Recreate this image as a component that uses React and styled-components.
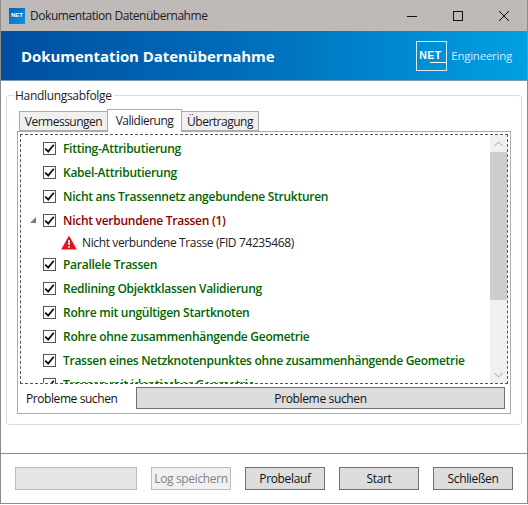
import React from 'react';
import styled, { createGlobalStyle } from 'styled-components';

const GlobalStyle = createGlobalStyle`
  html, body { margin: 0; padding: 0; background: #fff; }
  body { font-family: "Open Sans", "Liberation Sans", sans-serif; font-size: 12px; color: #111; }
`;

const checks = [
  { label: 'Fitting-Attributierung' },
  { label: 'Kabel-Attributierung' },
  { label: 'Nicht ans Trassennetz angebundene Strukturen' },
  { label: 'Nicht verbundene Trassen (1)', failed: true },
  { label: 'Parallele Trassen' },
  { label: 'Redlining Objektklassen Validierung' },
  { label: 'Rohre mit ungültigen Startknoten' },
  { label: 'Rohre ohne zusammenhängende Geometrie' },
  { label: 'Trassen eines Netzknotenpunktes ohne zusammenhängende Geometrie' },
  { label: 'Trassen mit identischer Geometrie' },
];

const App = () => (
  <>
    <GlobalStyle />
    <Window>
      <TitleBar>
        <AppIcon>NET</AppIcon>
        <WindowTitle>Dokumentation Datenübernahme</WindowTitle>
        <WindowControls>
          <svg width="12" height="12" viewBox="0 0 12 12"><path d="M1 6.5h10" stroke="#111" fill="none" /></svg>
          <svg width="12" height="12" viewBox="0 0 12 12"><rect x="1.5" y="1.5" width="9" height="9" stroke="#111" fill="none" /></svg>
          <svg width="12" height="12" viewBox="0 0 12 12"><path d="M1 1l10 10M11 1L1 11" stroke="#111" fill="none" /></svg>
        </WindowControls>
      </TitleBar>
      <Banner>
        <BannerTitle>Dokumentation Datenübernahme</BannerTitle>
        <Brand>
          <BrandBox>NET</BrandBox>
          <BrandName>Engineering</BrandName>
        </Brand>
      </Banner>
      <Content>
        <GroupBox>
          <GroupLegend>Handlungsabfolge</GroupLegend>
          <Tabs>
            <Tab $width={89}>Vermessungen</Tab>
            <Tab $active $width={75}>Validierung</Tab>
            <Tab $width={78}>Übertragung</Tab>
          </Tabs>
          <TabPanel>
            <List>
              <Rows>
                {checks.map(item => (
                  <React.Fragment key={item.label}>
                    <Row>
                      <Expander>{item.failed && <ExpanderGlyph />}</Expander>
                      <Check>
                        <svg width="11" height="11" viewBox="0 0 11 11">
                          <path d="M1.2 5.6l3 3L9.8 1.8" stroke="#111" strokeWidth="1.8" fill="none" />
                        </svg>
                      </Check>
                      <RowLabel $failed={item.failed}>{item.label}</RowLabel>
                    </Row>
                    {item.failed && (
                      <ChildRow>
                        <svg width="16" height="15" viewBox="0 0 16 15">
                          <path d="M8 0.5L15.8 14.5H0.2z" fill="#e81123" />
                          <path d="M7.2 5h1.6v5H7.2zM7.2 11h1.6v1.7H7.2z" fill="#fff" />
                        </svg>
                        <span>Nicht verbundene Trasse (FID 74235468)</span>
                      </ChildRow>
                    )}
                  </React.Fragment>
                ))}
              </Rows>
              <ScrollBar>
                <ScrollArrow>
                  <svg width="9" height="6" viewBox="0 0 9 6"><path d="M0.5 5L4.5 1l4 4" stroke="#a3a3a3" fill="none" /></svg>
                </ScrollArrow>
                <ScrollTrack>
                  <ScrollThumb />
                </ScrollTrack>
                <ScrollArrow>
                  <svg width="9" height="6" viewBox="0 0 9 6"><path d="M0.5 1L4.5 5l4-4" stroke="#a3a3a3" fill="none" /></svg>
                </ScrollArrow>
              </ScrollBar>
            </List>
            <SearchRow>
              <SearchLabel>Probleme suchen</SearchLabel>
              <SearchButton>Probleme suchen</SearchButton>
            </SearchRow>
          </TabPanel>
        </GroupBox>
      </Content>
      <Footer>
        <Progress />
        <FooterButton disabled>Log speichern</FooterButton>
        <FooterButton>Probelauf</FooterButton>
        <FooterButton>Start</FooterButton>
        <FooterButton>Schließen</FooterButton>
      </Footer>
    </Window>
  </>
);

const Window = styled.div`
  width: 528px;
  height: 504px;
  box-sizing: border-box;
  display: flex;
  flex-direction: column;
  background: #fff;
  border: 1px solid #8c8c8c;
  border-top: 0;
  overflow: hidden;
`;

const TitleBar = styled.div`
  height: 31px;
  flex: none;
  display: flex;
  align-items: center;
  padding-left: 8px;
  background: #bfbab8;
`;

const AppIcon = styled.div`
  width: 16px;
  height: 16px;
  margin-right: 5px;
  background: linear-gradient(135deg, #0a5fb0, #1196e0);
  color: #fff;
  font-family: "Liberation Sans", sans-serif;
  font-size: 6px;
  font-weight: 700;
  line-height: 14px;
  text-align: center;
`;

const WindowTitle = styled.div`
  font-size: 12px;
  letter-spacing: -0.45px;
  color: #1a1a1a;
`;

const WindowControls = styled.div`
  margin-left: auto;
  display: flex;
  gap: 34px;
  padding-right: 17px;
  svg { display: block; }
`;

const Banner = styled.div`
  height: 50px;
  flex: none;
  box-sizing: border-box;
  display: flex;
  align-items: center;
  justify-content: space-between;
  padding: 0 15px 0 20px;
  background: linear-gradient(90deg, #004f9f 0%, #0070bd 50%, #00a0e3 100%);
  border-bottom: 1px solid #7e99b3;
`;

const BannerTitle = styled.div`
  font-size: 15px;
  font-weight: 700;
  letter-spacing: -0.07px;
  color: #fff;
`;

const Brand = styled.div`
  display: flex;
  align-items: center;
  gap: 4px;
`;

const BrandBox = styled.div`
  position: relative;
  width: 31px;
  height: 30px;
  box-sizing: border-box;
  padding: 7px 0 0 2px;
  border: 1px solid #dcecf8;
  color: #fff;
  font-family: "Liberation Sans", sans-serif;
  font-size: 10.5px;
  font-weight: 700;
  letter-spacing: 0.4px;
  line-height: 13px;

  &::after {
    content: '';
    position: absolute;
    left: 13px;
    right: 0;
    top: 20px;
    height: 1px;
    background: #fff;
  }
`;

const BrandName = styled.div`
  font-size: 11.5px;
  letter-spacing: -0.25px;
  color: #d5ebf9;
`;

const Content = styled.div`
  flex: 1;
  padding: 14px 5px 0;
`;

const GroupBox = styled.div`
  position: relative;
  height: 330px;
  box-sizing: border-box;
  padding: 15px 10px 0;
  border: 1px solid #d5dfe5;
  border-radius: 3px;
`;

const GroupLegend = styled.div`
  position: absolute;
  top: -8px;
  left: 7px;
  padding: 0 2px 0 1px;
  background: #fff;
  font-size: 12px;
  line-height: 16px;
  letter-spacing: -0.32px;
  color: #222;
`;

const Tabs = styled.div`
  display: flex;
  align-items: flex-end;
  height: 20px;
  padding-left: 2px;
  position: relative;
  z-index: 1;
`;

const Tab = styled.div`
  box-sizing: border-box;
  width: ${props => props.$width}px;
  height: ${props => (props.$active ? '23px' : '20px')};
  margin-bottom: ${props => (props.$active ? '-1px' : '0')};
  margin-right: -1px;
  padding-bottom: ${props => (props.$active ? '2px' : '0')};
  display: flex;
  align-items: center;
  justify-content: center;
  position: relative;
  z-index: ${props => (props.$active ? 1 : 0)};
  background: ${props => (props.$active ? '#fff' : '#f0f0f0')};
  border: 1px solid #acacac;
  border-bottom: ${props => (props.$active ? '0' : '1px solid #acacac')};
  font-size: 12px;
  letter-spacing: -0.5px;
  color: #1a1a1a;
`;

const TabPanel = styled.div`
  height: 283px;
  box-sizing: border-box;
  padding: 2px;
  border: 1px solid #acacac;
`;

const List = styled.div`
  height: 250px;
  box-sizing: border-box;
  display: flex;
  border: 1px dashed #555;
  overflow: hidden;
`;

const Rows = styled.div`
  flex: 1;
  min-width: 0;
  overflow: hidden;
  padding-top: 1px;
`;

const Row = styled.div`
  height: 24px;
  display: flex;
  align-items: center;
  white-space: nowrap;
`;

const Expander = styled.div`
  width: 22px;
  flex: none;
  display: flex;
  justify-content: flex-end;
`;

const ExpanderGlyph = styled.div`
  width: 0;
  height: 0;
  margin-right: 7px;
  border-style: solid;
  border-width: 0 0 6px 6px;
  border-color: transparent transparent #7a7a7a transparent;
`;

const Check = styled.div`
  width: 13px;
  height: 13px;
  box-sizing: border-box;
  flex: none;
  display: flex;
  align-items: center;
  justify-content: center;
  border: 1px solid #555;
  background: #fff;
`;

const RowLabel = styled.span`
  margin-left: 7px;
  font-size: 12px;
  font-weight: 600;
  letter-spacing: -0.27px;
  color: ${props => (props.$failed ? '#8b0000' : '#006400')};
`;

const ChildRow = styled.div`
  height: 20px;
  display: flex;
  align-items: center;
  gap: 5px;
  padding-left: 40px;
  font-size: 12px;
  letter-spacing: -0.38px;
  color: #222;
  white-space: nowrap;
`;

const ScrollBar = styled.div`
  width: 17px;
  flex: none;
  display: flex;
  flex-direction: column;
  background: #f0f0f0;
`;

const ScrollArrow = styled.div`
  height: 17px;
  flex: none;
  display: flex;
  align-items: center;
  justify-content: center;
`;

const ScrollTrack = styled.div`
  flex: 1;
`;

const ScrollThumb = styled.div`
  height: 148px;
  background: #cdcdcd;
`;

const SearchRow = styled.div`
  display: flex;
  align-items: center;
  margin-top: 3px;
  padding: 0 0 0 6px;
  height: 22px;
`;

const SearchLabel = styled.div`
  width: 110px;
  flex: none;
  letter-spacing: -0.42px;
  color: #111;
`;

const ButtonBase = styled.button`
  box-sizing: border-box;
  height: 23px;
  padding: 0;
  font-family: inherit;
  font-size: 12px;
  letter-spacing: -0.35px;
  color: #111;
  background: #dddddd;
  border: 1px solid #707070;
`;

const SearchButton = styled(ButtonBase)`
  flex: 1;
  height: 22px;
  margin-right: 3px;
`;

const Footer = styled.div`
  height: 50px;
  box-sizing: border-box;
  flex: none;
  display: flex;
  align-items: flex-start;
  gap: 14px;
  padding: 13px 14px 0;
  border-top: 1px solid #8c8c8c;
`;

const Progress = styled.div`
  width: 122px;
  height: 23px;
  box-sizing: border-box;
  background: #e6e6e6;
  border: 1px solid #bcbcbc;
`;

const FooterButton = styled(ButtonBase)`
  width: 80px;
  &:disabled {
    color: #838383;
    background: #f0f0f0;
    border-color: #bcbcbc;
  }
`;

export default App;
